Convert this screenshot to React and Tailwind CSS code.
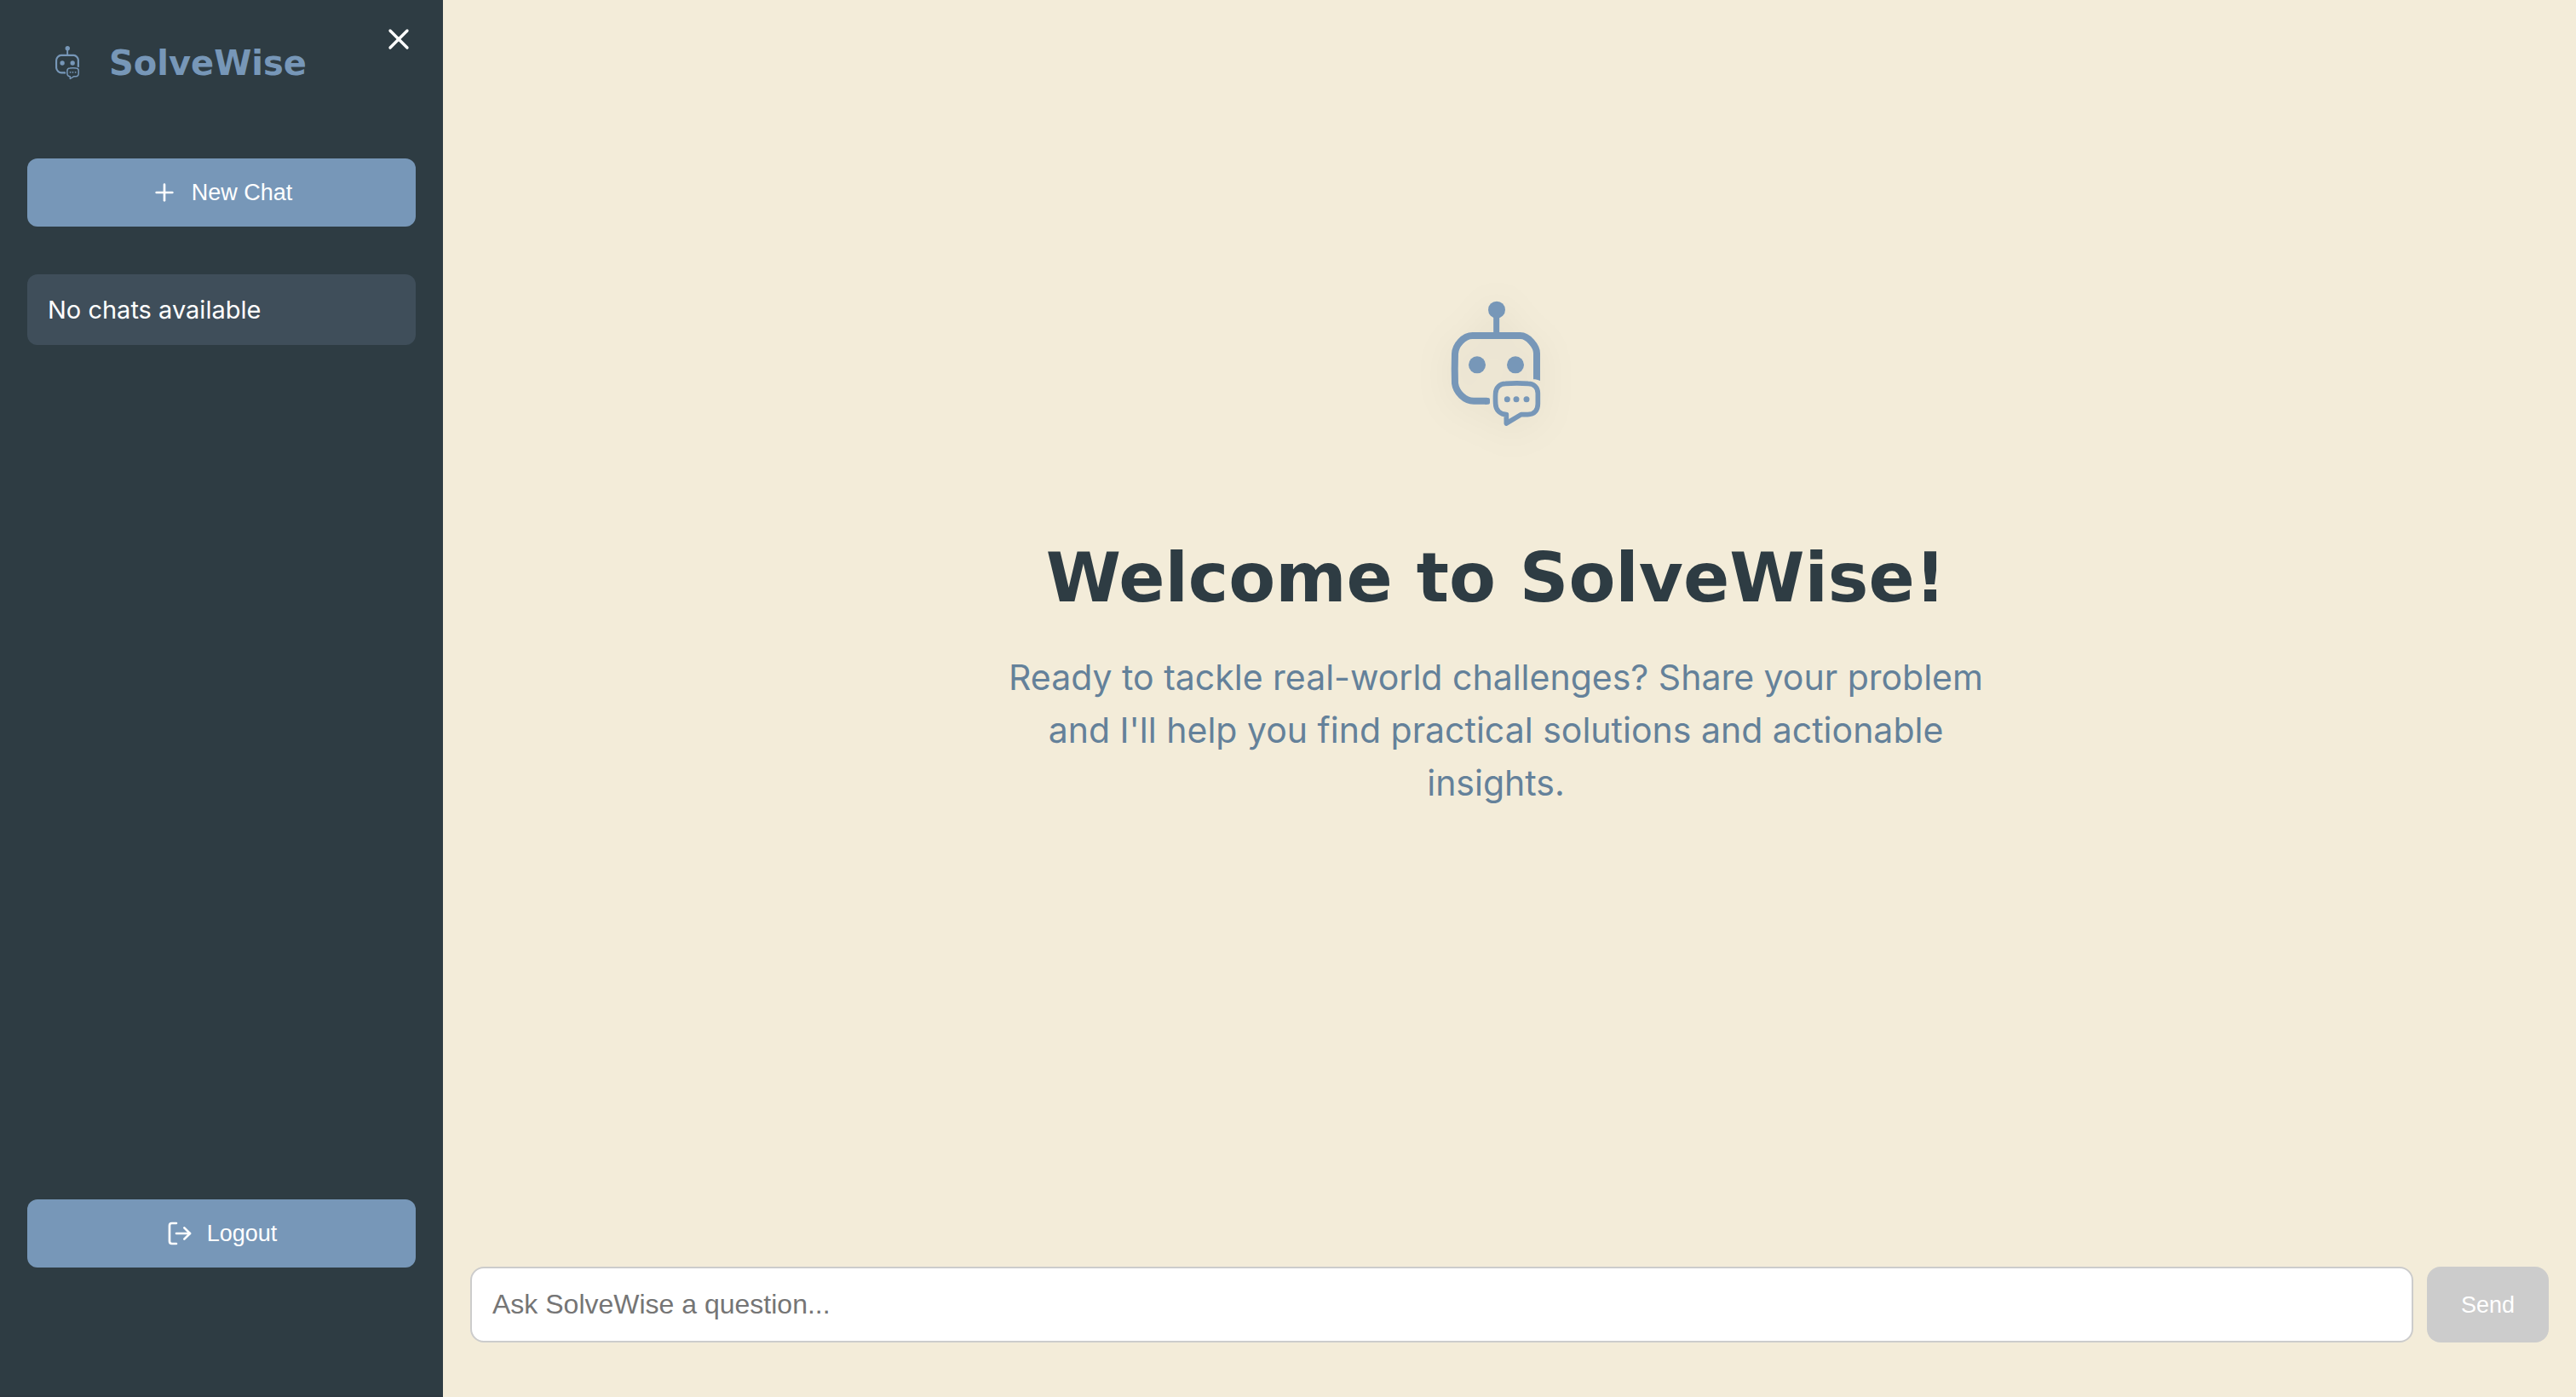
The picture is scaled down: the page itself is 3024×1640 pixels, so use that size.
import { X, Plus, LogOut } from "lucide-react";

function RobotLogo({ className }) {
  return (
    <svg viewBox="-12 0 600 660" className={className} fill="none" stroke="currentColor" aria-hidden="true">
      <circle cx="291" cy="131" r="30" fill="currentColor" stroke="none" />
      <path d="M290 150V222" strokeWidth="21" />
      <path
        d="M432 376V284C432 260 402 222 374 222H206C174 222 145 256 144 286C143 316 143 360 144 390C148 422 178 452 210 452H257"
        strokeWidth="24"
      />
      <path d="M420 362H444V381L420 373Z" fill="currentColor" stroke="none" />
      <path d="M250 441H261Q267 441 267 447V458Q267 464 261 464H250Z" fill="currentColor" stroke="none" />
      <circle cx="222" cy="325" r="30" fill="currentColor" stroke="none" />
      <circle cx="357" cy="325" r="30" fill="currentColor" stroke="none" />
      <path
        d="M325 531V500C305 500 287 485 287 462C286 446 286 440 287 425C288 405 302 391 322 391Q362 388 402 391C422 391 436 405 436 425V462C436 485 424 500 400 500H377L325 531Z"
        strokeWidth="17"
        strokeLinejoin="round"
      />
      <circle cx="328" cy="446" r="10.5" fill="currentColor" stroke="none" />
      <circle cx="360" cy="446" r="10.5" fill="currentColor" stroke="none" />
      <circle cx="396" cy="446" r="10.5" fill="currentColor" stroke="none" />
    </svg>
  );
}

const sideButton =
  "flex h-20 w-full items-center justify-center gap-4 rounded-xl bg-[#7797b8] text-[27px] leading-8 text-white";

function Sidebar() {
  return (
    <aside className="relative flex w-[520px] shrink-0 flex-col border-b-2 border-[#2d3840] bg-[#2e3c43] px-8 pt-10">
      <button type="button" aria-label="Close sidebar" className="absolute top-[26px] right-8 text-white">
        <X size={40} />
      </button>
      <header className="flex h-[68px] items-center gap-[22px] pl-5 text-[#7797b8]">
        <RobotLogo className="h-[59px] w-[54px]" />
        <h2 className="font-['DejaVu_Sans',sans-serif] text-[40px] leading-12 font-bold">SolveWise</h2>
      </header>
      <button type="button" className={`mt-[78px] ${sideButton}`}>
        <Plus size={32} />
        New Chat
      </button>
      <ul className="mt-14 grow">
        <li className="rounded-xl bg-[#3f4e5a] px-6 py-5 font-['Inter',sans-serif] text-[29px] leading-[43px] text-white">
          No chats available
        </li>
      </ul>
      <button type="button" className={`mb-[150px] ${sideButton}`}>
        <LogOut size={32} />
        Logout
      </button>
    </aside>
  );
}

export default function App() {
  return (
    <div className="flex min-h-screen bg-[#f3ecd9] font-['Liberation_Sans',sans-serif]">
      <Sidebar />
      <main className="flex min-w-0 grow flex-col px-8 pb-16">
        <section className="flex grow flex-col items-center pt-80 pr-8 text-center">
          <RobotLogo className="h-[220px] w-[200px] text-[#7797b8] drop-shadow-[0_8px_20px_rgba(0,0,0,0.1)]" />
          <h1 className="mt-[84px] font-['DejaVu_Sans',sans-serif] text-[80px] leading-[110px] font-bold text-[#2e3c43]">
            Welcome to SolveWise!
          </h1>
          <p className="mt-[30px] max-w-[1200px] font-['Inter',sans-serif] text-[41px] leading-[62px] text-[#64819a]">
            Ready to tackle real-world challenges? Share your problem and I'll help you find practical solutions and
            actionable insights.
          </p>
        </section>
        <form className="flex gap-4" onSubmit={(e) => e.preventDefault()}>
          <input
            type="text"
            aria-label="Question"
            placeholder="Ask SolveWise a question..."
            className="h-[89px] min-w-0 grow rounded-2xl border-2 border-[#cccccc] bg-white px-6 text-[32px] placeholder:text-[#757575]"
          />
          <button type="submit" disabled className="rounded-2xl bg-[#cccccc] px-10 text-[27px] leading-8 text-white">
            Send
          </button>
        </form>
      </main>
    </div>
  );
}
